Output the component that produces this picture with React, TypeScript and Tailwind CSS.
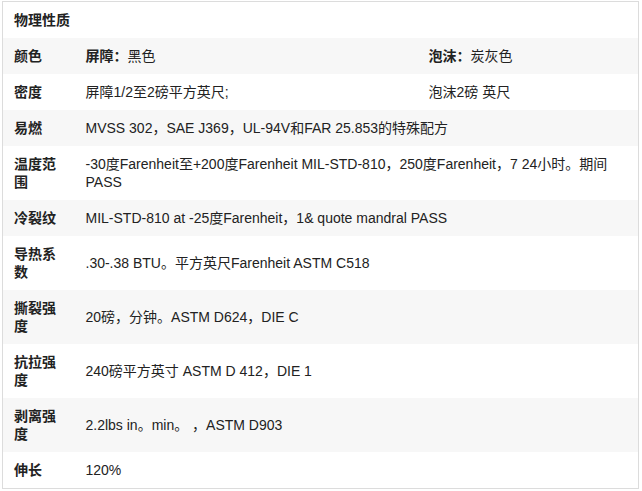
const rows: { label: string; value: React.ReactNode; extra?: React.ReactNode }[] = [
  {
    label: "颜色",
    value: (
      <>
        <b>屏障：</b>黑色
      </>
    ),
    extra: (
      <>
        <b>泡沫：</b>炭灰色
      </>
    ),
  },
  { label: "密度", value: "屏障1/2至2磅平方英尺;", extra: "泡沫2磅 英尺" },
  { label: "易燃", value: "MVSS 302，SAE J369，UL-94V和FAR 25.853的特殊配方" },
  {
    label: "温度范围",
    value: (
      <>
        -30度Farenheit至+200度Farenheit MIL-STD-810，250度Farenheit，7 24小时。期间
        <br />
        PASS
      </>
    ),
  },
  { label: "冷裂纹", value: "MIL-STD-810 at -25度Farenheit，1& quote mandral PASS" },
  { label: "导热系数", value: ".30-.38 BTU。平方英尺Farenheit ASTM C518" },
  { label: "撕裂强度", value: "20磅，分钟。ASTM D624，DIE C" },
  { label: "抗拉强度", value: "240磅平方英寸 ASTM D 412，DIE 1" },
  { label: "剥离强度", value: "2.2lbs in。min。 ，ASTM D903" },
  { label: "伸长", value: "120%" },
];

export default function App() {
  return (
    <div className="bg-white pl-[2px] pt-[1px]">
      <table
        className="w-[637px] border border-[#dcdcdc] border-collapse text-[14px] leading-[18px] text-[#222]"
        style={{ fontFamily: '"Liberation Sans", "Noto Sans CJK SC", sans-serif' }}
      >
        <colgroup>
          <col className="w-[72px]" />
          <col className="w-[343px]" />
          <col />
        </colgroup>
        <tbody>
          <tr className="bg-white">
            <td colSpan={3} className="h-[36px] pl-[11px] font-bold align-middle">
              物理性质
            </td>
          </tr>
          {rows.map((r, i) => (
            <tr key={r.label} className={i % 2 === 0 ? "bg-[#f7f7f7]" : "bg-white"}>
              <td className="py-[9px] pl-[11px] pr-[11px] font-bold align-middle">{r.label}</td>
              {r.extra ? (
                <>
                  <td className="py-[9px] pl-[11px] align-middle">{r.value}</td>
                  <td className="py-[9px] pl-[11px] align-middle">{r.extra}</td>
                </>
              ) : (
                <td colSpan={2} className="py-[9px] pl-[11px] pr-[11px] align-middle">
                  {r.value}
                </td>
              )}
            </tr>
          ))}
        </tbody>
      </table>
    </div>
  );
}
